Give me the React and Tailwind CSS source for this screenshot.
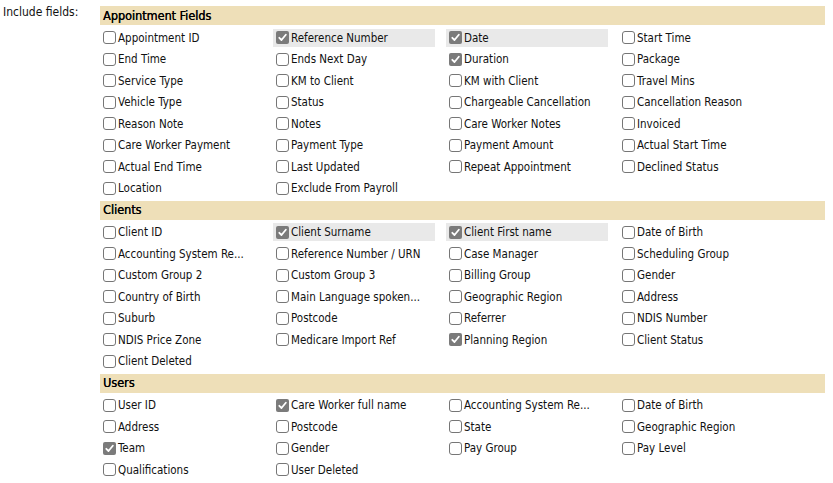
import React from "react";

const sections = [
  {
    title: "Appointment Fields",
    items: [
      ["Appointment ID"], ["Reference Number", 1, 1], ["Date", 1, 1], ["Start Time"],
      ["End Time"], ["Ends Next Day"], ["Duration", 1], ["Package"],
      ["Service Type"], ["KM to Client"], ["KM with Client"], ["Travel Mins"],
      ["Vehicle Type"], ["Status"], ["Chargeable Cancellation"], ["Cancellation Reason"],
      ["Reason Note"], ["Notes"], ["Care Worker Notes"], ["Invoiced"],
      ["Care Worker Payment"], ["Payment Type"], ["Payment Amount"], ["Actual Start Time"],
      ["Actual End Time"], ["Last Updated"], ["Repeat Appointment"], ["Declined Status"],
      ["Location"], ["Exclude From Payroll"],
    ],
  },
  {
    title: "Clients",
    items: [
      ["Client ID"], ["Client Surname", 1, 1], ["Client First name", 1, 1], ["Date of Birth"],
      ["Accounting System Re..."], ["Reference Number / URN"], ["Case Manager"], ["Scheduling Group"],
      ["Custom Group 2"], ["Custom Group 3"], ["Billing Group"], ["Gender"],
      ["Country of Birth"], ["Main Language spoken..."], ["Geographic Region"], ["Address"],
      ["Suburb"], ["Postcode"], ["Referrer"], ["NDIS Number"],
      ["NDIS Price Zone"], ["Medicare Import Ref"], ["Planning Region", 1], ["Client Status"],
      ["Client Deleted"],
    ],
  },
  {
    title: "Users",
    items: [
      ["User ID"], ["Care Worker full name", 1], ["Accounting System Re..."], ["Date of Birth"],
      ["Address"], ["Postcode"], ["State"], ["Geographic Region"],
      ["Team", 1], ["Gender"], ["Pay Group"], ["Pay Level"],
      ["Qualifications"], ["User Deleted"],
    ],
  },
];

function Box({ checked }) {
  if (checked) {
    return (
      <span className="ml-[3px] mr-[2px] flex h-[13px] w-[13px] shrink-0 items-center justify-center rounded-[2px] bg-[#7b7b7b]">
        <svg width="9" height="9" viewBox="0 0 9 9">
          <path d="M1.3 4.8 L3.5 7 L7.8 1.8" fill="none" stroke="#fff" strokeWidth="1.8" strokeLinecap="round" strokeLinejoin="round" />
        </svg>
      </span>
    );
  }
  return (
    <span className="ml-[3px] mr-[2px] h-[13px] w-[13px] shrink-0 rounded-[3px] border border-[#767676] bg-white" />
  );
}

function Cell({ label, checked, hl }) {
  return (
    <div className={`flex h-[18px] items-center whitespace-nowrap ${hl ? "bg-[#e9e9e9]" : ""}`}>
      <Box checked={checked} />
      <span className="pt-[2px]">{label}</span>
    </div>
  );
}

export default function App() {
  return (
    <div
      className="flex bg-white text-[11.5px] text-[#111] w-[833px] h-[483px]"
      style={{ fontFamily: '"DejaVu Sans Condensed", Tahoma, "DejaVu Sans", sans-serif' }}
    >
      <div className="w-[100px] shrink-0 pl-[3px] pt-[4px] text-[12px] leading-[16px]">Include fields:</div>
      <div className="mt-[6px] flex w-[725px] flex-col gap-y-[3.5px]">
        {sections.map((s) => (
          <React.Fragment key={s.title}>
            <div className="flex h-[19px] items-center bg-[#eedfb8] pl-[3px] pt-[1px] text-[12.5px] font-normal text-black [text-shadow:0.3px_0_0_#000]">
              {s.title}
            </div>
            <div className="grid grid-cols-[162px_162px_162px_1fr] gap-x-[11px] gap-y-[3.5px]">
              {s.items.map((it, i) => (
                <Cell key={i} label={it[0]} checked={!!it[1]} hl={!!it[2]} />
              ))}
            </div>
          </React.Fragment>
        ))}
      </div>
    </div>
  );
}
